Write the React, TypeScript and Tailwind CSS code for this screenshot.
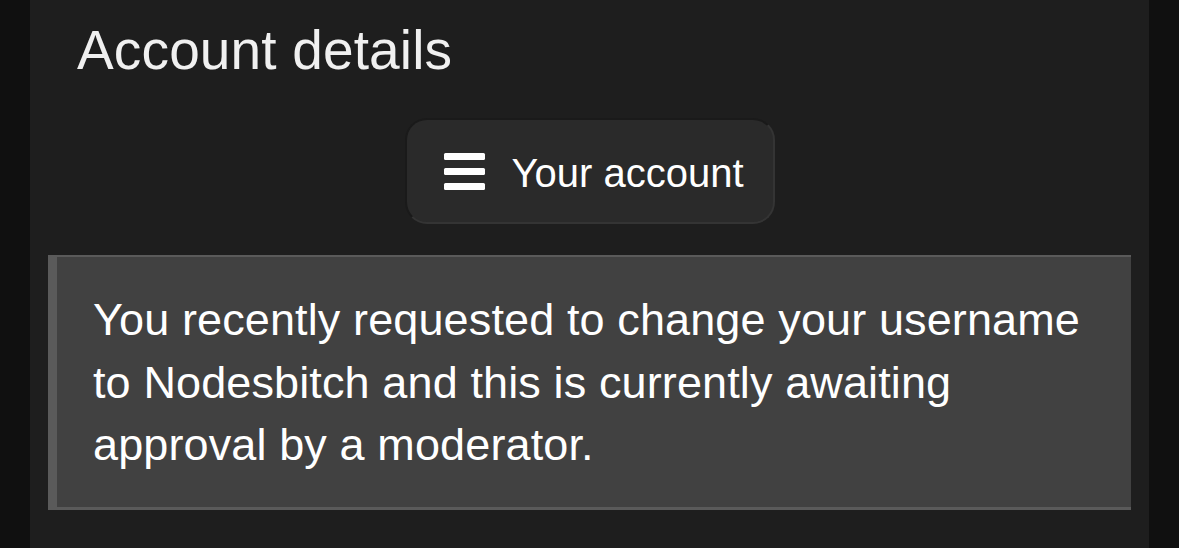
export default function App() {
  return (
    <div
      className="w-[1179px] h-[548px] bg-[#101010] flex overflow-hidden"
      style={{ fontFamily: '"Liberation Sans", Arial, sans-serif' }}
    >
      <div className="ml-[30px] w-[1119px] h-full bg-[#1e1e1e] flex flex-col px-[18px]">
        <h1 className="pt-[23px] pl-[29px] text-[55px] leading-[55px] text-[#f0f0f0] font-normal tracking-[0.15px]">
          Account details
        </h1>
        <div className="flex justify-center mt-[40px]">
          <button className="h-[106px] w-[370px] flex items-center pl-[37px] rounded-[22px] bg-[#2a2a2a] border-2 border-t-[#1a1a1a] border-l-[#1a1a1a] border-r-[#343434] border-b-[#343434]">
            <span className="flex flex-col gap-[8px] w-[41px]">
              <span className="block h-[7px] w-[41px] rounded-[1.5px] bg-white" />
              <span className="block h-[7px] w-[41px] rounded-[1.5px] bg-white" />
              <span className="block h-[7px] w-[41px] rounded-[1.5px] bg-white" />
            </span>
            <span className="ml-[27px] pt-[3px] text-[40px] leading-[40px] text-white">
              Your account
            </span>
          </button>
        </div>
        <div className="mt-[31px] bg-[#414141] border-l-[9px] border-t-[2px] border-b-[3px] border-[#5a5a5a] pl-[36px] pr-[36px] pt-[32px] pb-[30px] text-[45px] leading-[62.5px] text-white tracking-[0.12px]">
          You recently requested to change your username to Nodesbitch and this is currently awaiting approval by a moderator.
        </div>
      </div>
    </div>
  );
}
